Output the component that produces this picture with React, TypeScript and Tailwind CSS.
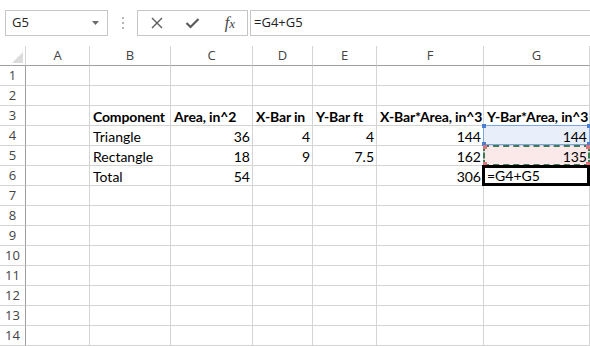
import React from 'react';

type Cell = { t?: string; right?: boolean; bold?: boolean };

const colLetters = ['A', 'B', 'C', 'D', 'E', 'F', 'G'];

const data: Record<number, Cell[]> = {
  3: [
    {},
    { t: 'Component', bold: true },
    { t: 'Area, in^2', bold: true },
    { t: 'X-Bar in', bold: true },
    { t: 'Y-Bar ft', bold: true },
    { t: 'X-Bar*Area, in^3', bold: true },
    { t: 'Y-Bar*Area, in^3', bold: true },
  ],
  4: [{}, { t: 'Triangle' }, { t: '36', right: true }, { t: '4', right: true }, { t: '4', right: true }, { t: '144', right: true }, { t: '144', right: true }],
  5: [{}, { t: 'Rectangle' }, { t: '18', right: true }, { t: '9', right: true }, { t: '7.5', right: true }, { t: '162', right: true }, { t: '135', right: true }],
  6: [{}, { t: 'Total' }, { t: '54', right: true }, {}, {}, { t: '306', right: true }, {}],
};

const Handles = ({ color }: { color: string }) => (
  <>
    <span className={`absolute -left-[2px] -top-[2px] w-[4px] h-[4px] ${color}`} />
    <span className={`absolute -right-[2px] -top-[2px] w-[4px] h-[4px] ${color}`} />
    <span className={`absolute -left-[2px] -bottom-[2px] w-[4px] h-[4px] ${color}`} />
    <span className={`absolute -right-[2px] -bottom-[2px] w-[4px] h-[4px] ${color}`} />
  </>
);

const Toolbar = () => (
  <div className="flex h-[46px] pt-[10px] font-['Open_Sans',sans-serif] text-[13px] text-[#222]">
    <div className="ml-[5px] w-[103px] h-[26px] border border-[#c6c6c6] flex items-center justify-between pl-[6px] pr-[8px]">
      <span>G5</span>
      <svg width="7" height="4" viewBox="0 0 7 4">
        <path d="M0 0 H7 L3.5 4 Z" fill="#6a6a6a" />
      </svg>
    </div>
    <div className="w-[29px] h-[26px] flex flex-col items-center justify-center gap-[3px]">
      <span className="w-[2px] h-[2px] bg-[#b5b5b5]" />
      <span className="w-[2px] h-[2px] bg-[#b5b5b5]" />
      <span className="w-[2px] h-[2px] bg-[#b5b5b5]" />
    </div>
    <div className="w-[111px] h-[26px] border border-[#c6c6c6] flex items-center">
      <div className="w-[37px] flex justify-center pl-[1px]">
        <svg width="12" height="12" viewBox="0 0 12 12">
          <path d="M1 1 L11 11 M11 1 L1 11" stroke="#5a5a5a" strokeWidth="1.4" />
        </svg>
      </div>
      <div className="w-[37px] flex justify-center">
        <svg width="15" height="12" viewBox="0 0 15 12">
          <path d="M1.5 6 L5.5 10 L13.5 2" stroke="#5a5a5a" strokeWidth="2.2" fill="none" />
        </svg>
      </div>
      <div className="w-[37px] flex justify-center pl-[2px]">
        <span className="font-['Liberation_Serif',serif] italic text-[16px] text-[#444] leading-none">
          f<span className="text-[13px]">x</span>
        </span>
      </div>
    </div>
    <div className="ml-[2px] flex-1 h-[26px] border-y border-l border-[#c6c6c6] flex items-center pl-[3px]">
      =G4+G5
    </div>
  </div>
);

const App: React.FC = () => {
  const rows = Array.from({ length: 14 }, (_, i) => i + 1);

  return (
    <div className="w-[590px] h-[346px] bg-white overflow-hidden">
      <Toolbar />
      <div className="grid grid-cols-[26px_64px_81px_82px_60px_64px_107px_106px] auto-rows-[20px]">
        {/* header row */}
        <div className="border-r border-b border-r-[#d4d4d4] border-b-[#9f9f9f] flex items-end justify-end pr-[2px] pb-[2px]">
          <svg width="11" height="11" viewBox="0 0 11 11">
            <path d="M11 0 V11 H0 Z" fill="#dcdcdc" />
          </svg>
        </div>
        {colLetters.map((c) => (
          <div
            key={c}
            className="border-r border-b border-r-[#d4d4d4] border-b-[#9f9f9f] flex items-center justify-center font-['Open_Sans',sans-serif] text-[13px] text-[#444]"
          >
            {c}
          </div>
        ))}

        {rows.map((r) => {
          const cells = data[r] ?? Array.from({ length: 7 }, () => ({} as Cell));
          return (
            <React.Fragment key={r}>
              <div className="border-r border-b border-r-[#9f9f9f] border-b-[#d4d4d4] flex items-center justify-center font-['Open_Sans',sans-serif] text-[13px] text-[#444]">
                {r}
              </div>
              {cells.map((cell, ci) => {
                const isG = ci === 6;
                let bg = 'bg-white';
                if (isG && r === 4) bg = 'bg-[#e8effb]';
                if (isG && r === 5) bg = 'bg-[#fbe8e9]';
                return (
                  <div
                    key={ci}
                    className={`relative border-r border-b border-[#d4d4d4] flex items-center px-[3px] pt-[1px] whitespace-nowrap font-['Lato',sans-serif] text-[14px] text-black ${bg} ${
                      cell.right ? 'justify-end pr-[2px]' : 'justify-start'
                    } ${cell.bold ? 'font-bold tracking-[-0.15px]' : ''}`}
                  >
                    {cell.t}
                    {isG && r === 4 && (
                      <div className="absolute -left-[1px] -top-[1px] -right-[1px] bottom-0 border border-[#7fa6e0]">
                        <Handles color="bg-[#4a7fd0]" />
                      </div>
                    )}
                    {isG && r === 5 && (
                      <div className="absolute -left-[1px] -top-[1px] -right-[1px] -bottom-[1px] border-2 border-dashed border-[#3d7a50]">
                        <Handles color="bg-[#e0737a]" />
                      </div>
                    )}
                    {isG && r === 6 && (
                      <div className="absolute -left-[2px] -top-[1px] -right-[1px] -bottom-[3px] border-[3px] border-b-[5px] border-black flex items-center pl-[2px] bg-white">
                        =G4+G5
                      </div>
                    )}
                  </div>
                );
              })}
            </React.Fragment>
          );
        })}
      </div>
    </div>
  );
};

export default App;
